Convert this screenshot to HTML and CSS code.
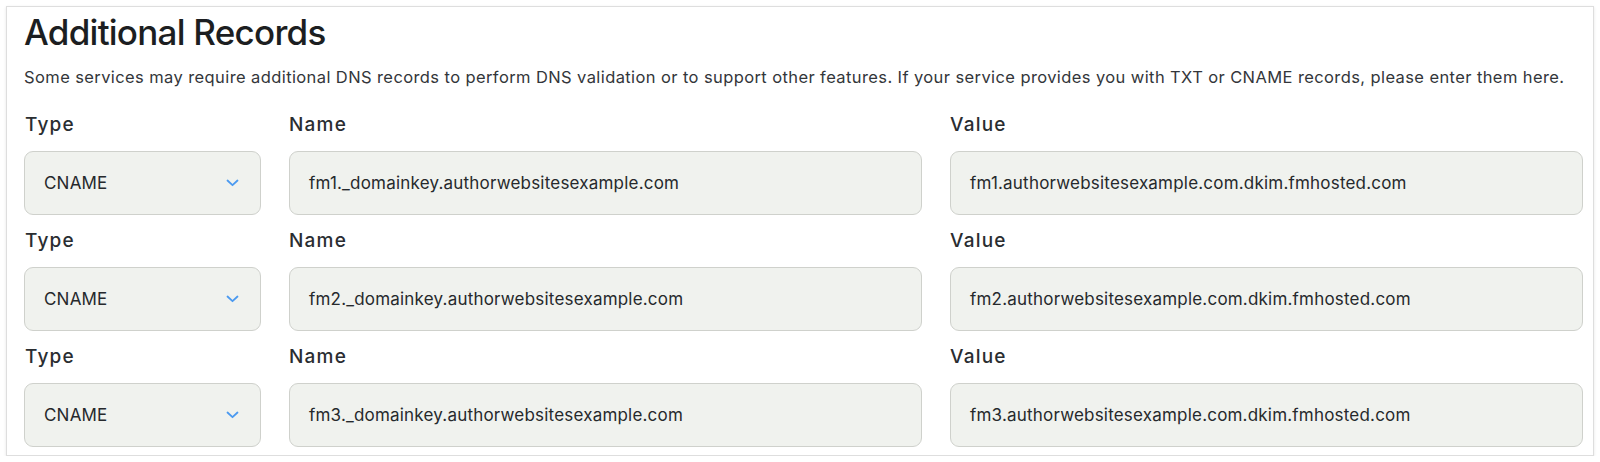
FILE: index.html
```html
<!DOCTYPE html>
<html>
<head>
<meta charset="utf-8">
<link rel="stylesheet" href="styles.css">
</head>
<body>
<section class="card">
  <h2 class="title">Additional Records</h2>
  <p class="desc">Some services may require additional DNS records to perform DNS validation or to support other features. If your service provides you with TXT or CNAME records, please enter them here.</p>
  <div class="rows">
    <div class="row">
      <div class="field"><label>Type</label><div class="box select"><span>CNAME</span><svg class="chev" width="13" height="8" viewBox="0 0 13 8"><path d="M1.5 1.5 6.5 6.2 11.5 1.5" fill="none" stroke="#4b9af0" stroke-width="1.8" stroke-linecap="round" stroke-linejoin="round"/></svg></div></div>
      <div class="field"><label>Name</label><div class="box">fm1._domainkey.authorwebsitesexample.com</div></div>
      <div class="field"><label>Value</label><div class="box">fm1.authorwebsitesexample.com.dkim.fmhosted.com</div></div>
    </div>
    <div class="row">
      <div class="field"><label>Type</label><div class="box select"><span>CNAME</span><svg class="chev" width="13" height="8" viewBox="0 0 13 8"><path d="M1.5 1.5 6.5 6.2 11.5 1.5" fill="none" stroke="#4b9af0" stroke-width="1.8" stroke-linecap="round" stroke-linejoin="round"/></svg></div></div>
      <div class="field"><label>Name</label><div class="box">fm2._domainkey.authorwebsitesexample.com</div></div>
      <div class="field"><label>Value</label><div class="box">fm2.authorwebsitesexample.com.dkim.fmhosted.com</div></div>
    </div>
    <div class="row">
      <div class="field"><label>Type</label><div class="box select"><span>CNAME</span><svg class="chev" width="13" height="8" viewBox="0 0 13 8"><path d="M1.5 1.5 6.5 6.2 11.5 1.5" fill="none" stroke="#4b9af0" stroke-width="1.8" stroke-linecap="round" stroke-linejoin="round"/></svg></div></div>
      <div class="field"><label>Name</label><div class="box">fm3._domainkey.authorwebsitesexample.com</div></div>
      <div class="field"><label>Value</label><div class="box">fm3.authorwebsitesexample.com.dkim.fmhosted.com</div></div>
    </div>
  </div>
</section>
</body>
</html>
```
FILE: styles.css
```css
html, body { margin: 0; padding: 0; background: #ffffff; }
body { font-family: Inter, "Noto Sans", sans-serif; color: #1f2226; }
.card {
  margin: 6px 6px 0 6px;
  height: 450px;
  box-sizing: border-box;
  border: 1px solid #dedede;
  box-shadow: 0 1px 3px rgba(0,0,0,0.10);
  padding: 5px 10px 0 17px;
  background: #fff;
}
.title {
  margin: 0;
  font-size: 35px;
  font-weight: 500;
  line-height: 40px;
  letter-spacing: -0.75px;
  color: #1c1e21;
}
.desc {
  margin: 15px 0 0 0;
  font-size: 16.5px;
  line-height: 20px;
  letter-spacing: 0.4px;
  color: #33363a;
  white-space: nowrap;
}
.rows { margin-top: 26px; display: flex; flex-direction: column; gap: 14px; }
.row { display: grid; grid-template-columns: 237px 1fr 1fr; column-gap: 28px; }
.field { display: flex; flex-direction: column; }
.field label {
  font-size: 19px;
  font-weight: 500;
  line-height: 24px;
  height: 24px;
  margin-bottom: 14px;
  letter-spacing: 1.2px;
  color: #2a2d31;
}
.field:first-child label { padding-left: 1px; }
.box {
  height: 64px;
  box-sizing: border-box;
  background: #f0f2ee;
  border: 1px solid #cfd1cc;
  border-radius: 9px;
  display: flex;
  align-items: center;
  padding: 0 19px;
  font-size: 17px;
  letter-spacing: 0.2px;
  color: #26292c;
  white-space: nowrap;
}
.select { justify-content: space-between; padding-right: 21px; }
.chev { display: block; }
```
